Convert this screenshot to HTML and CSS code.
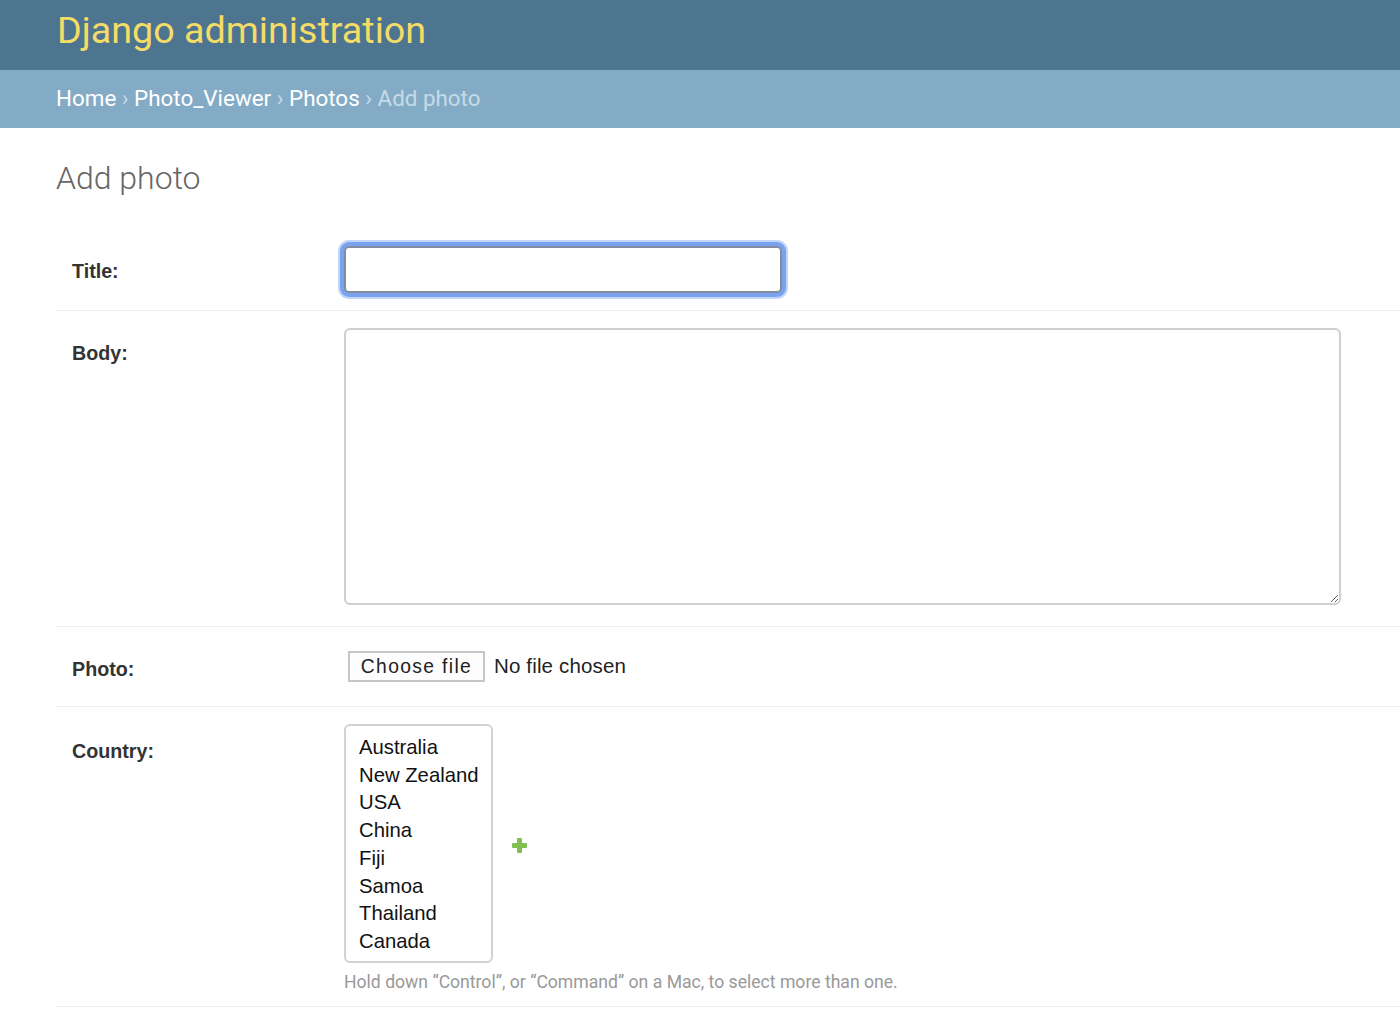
FILE: index.html
```html
<!DOCTYPE html>
<html lang="en">
<head>
<meta charset="utf-8">
<title>Add photo | Django site admin</title>
<link rel="stylesheet" href="styles.css">
</head>
<body>
<header class="header">
  <div class="branding">Django administration</div>
</header>
<nav class="breadcrumbs">
  <a href="#">Home</a> › <a href="#">Photo_Viewer</a> › <a href="#">Photos</a> › Add photo
</nav>
<main class="content">
  <h1 class="page-title">Add photo</h1>
  <form class="form">
    <div class="form-row">
      <label class="field-label">Title:</label>
      <div class="field">
        <input class="text-input" type="text">
      </div>
    </div>
    <div class="form-row">
      <label class="field-label">Body:</label>
      <div class="field">
        <textarea class="textarea"></textarea>
      </div>
    </div>
    <div class="form-row">
      <label class="field-label">Photo:</label>
      <div class="field file-field">
        <span class="file-button">Choose file</span>
        <span class="file-status">No file chosen</span>
      </div>
    </div>
    <div class="form-row">
      <label class="field-label label-low">Country:</label>
      <div class="field">
        <div class="related">
          <div class="multi-select" role="listbox">
            <div class="option">Australia</div>
            <div class="option">New Zealand</div>
            <div class="option">USA</div>
            <div class="option">China</div>
            <div class="option">Fiji</div>
            <div class="option">Samoa</div>
            <div class="option">Thailand</div>
            <div class="option">Canada</div>
          </div>
          <a class="add-link" href="#" title="Add another country">
            <svg width="15" height="15" viewBox="0 0 15 15" aria-hidden="true">
              <rect x="5" y="0" width="5" height="15" rx="1" fill="#80c053"/>
              <rect x="0" y="5" width="15" height="5" rx="1" fill="#80c053"/>
            </svg>
          </a>
        </div>
        <div class="help">Hold down “Control”, or “Command” on a Mac, to select more than one.</div>
      </div>
    </div>
  </form>
</main>
</body>
</html>
```
FILE: styles.css
```css
html, body {
  margin: 0;
  padding: 0;
  background: #fff;
}

body {
  font-family: Roboto, "Liberation Sans", sans-serif;
  color: #333;
}

.header {
  background: #4e7590;
  height: 70px;
  box-sizing: border-box;
  padding: 6px 56px 0 57px;
}

.branding {
  color: #f4dc66;
  font-size: 37.7px;
  line-height: 48px;
  font-weight: 400;
}

.breadcrumbs {
  background: #84abc5;
  height: 58px;
  box-sizing: border-box;
  padding: 15px 56px 0;
  font-size: 22.4px;
  line-height: 26px;
  color: #c4dce8;
}

.breadcrumbs a {
  color: #fff;
  text-decoration: none;
}

.content {
  padding: 0 0 0 56px;
}

.page-title {
  margin: 31px 0 32px;
  font-size: 32px;
  line-height: 38px;
  font-weight: 300;
  color: #666;
}

.form {
  margin: 0;
}

.form-row {
  display: flex;
  align-items: flex-start;
  padding: 17px 0 17px 16px;
  border-bottom: 1px solid #eee;
}

.field-label {
  width: 272px;
  flex: none;
  padding-top: 13px;
  font-family: "Liberation Sans", Arial, sans-serif;
  font-weight: bold;
  font-size: 19.7px;
  line-height: 24px;
  color: #333;
}

.field-label.label-low {
  padding-top: 15px;
}

.field {
  flex: 1;
  min-width: 0;
}

.text-input {
  display: block;
  box-sizing: border-box;
  width: 438px;
  height: 47px;
  margin: 0;
  border: 2px solid #838da1;
  border-radius: 5px;
  background: #fff;
  box-shadow: 0 0 0 4px #79a3ee, 0 0 0 6px rgba(121, 163, 238, 0.45);
  outline: none;
}

.textarea {
  display: block;
  box-sizing: border-box;
  width: 997px;
  height: 277px;
  margin: 0 0 4px;
  border: 2px solid #cfcfcf;
  border-radius: 6px;
  background: #fff;
  resize: both;
}

.file-field {
  display: flex;
  align-items: center;
  height: 45px;
  font-family: "Liberation Sans", Arial, sans-serif;
  color: #222;
}

.file-button {
  box-sizing: border-box;
  width: 137px;
  height: 31px;
  margin-left: 4px;
  border: 2px solid #c6c6c6;
  background: #fdfdfd;
  display: flex;
  align-items: center;
  justify-content: center;
  font-size: 19.3px;
  letter-spacing: 1.35px;
  padding-top: 1px;
}

.file-status {
  margin-left: 9px;
  font-size: 20.5px;
  letter-spacing: 0.15px;
  margin-top: -2px;
}

.related {
  display: flex;
  align-items: center;
}

.multi-select {
  box-sizing: border-box;
  width: 149px;
  height: 239px;
  border: 2px solid #d2d2d2;
  border-radius: 6px;
  padding: 8px 12px 6px 13px;
  font-family: "Liberation Sans", Arial, sans-serif;
  font-size: 20.3px;
  line-height: 27.7px;
  color: #111;
  white-space: nowrap;
}

.add-link {
  display: block;
  width: 15px;
  height: 15px;
  margin: 4px 0 0 19px;
}

.add-link svg {
  display: block;
}

.help {
  margin-top: 13px;
  font-size: 17.6px;
  line-height: 13px;
  color: #999;
}
```
